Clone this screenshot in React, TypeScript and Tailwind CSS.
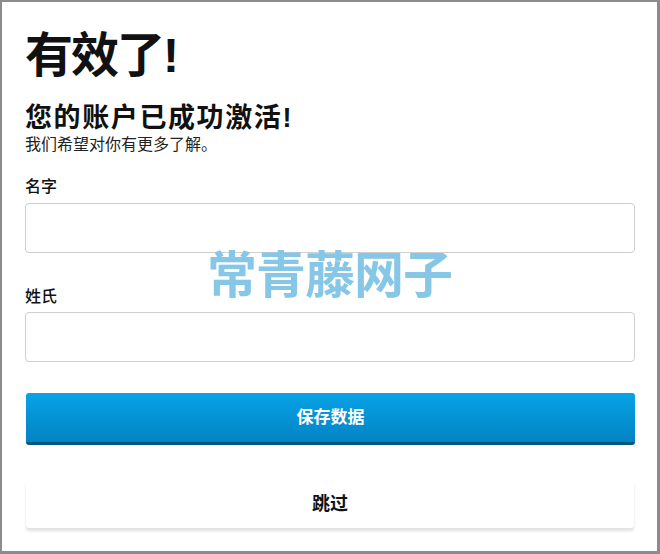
export default function App() {
  return (
    <div
      className="relative w-[660px] h-[554px] bg-white border-l-2 border-t-2 border-r-[3px] border-b-[3px] border-[#8c8c8c] overflow-hidden"
      style={{ fontFamily: '"Liberation Sans", "Noto Sans CJK SC", sans-serif' }}
    >
      <div className="pl-[23px] pt-[26px] flex flex-col">
        <h1 className="text-[48px] leading-[56px] font-bold text-[#111] tracking-[-2px]">有效了!</h1>
        <h2 className="mt-[18px] text-[27px] leading-[33px] font-bold text-[#111] tracking-[1.6px]">您的账户已成功激活!</h2>
        <p className="text-[16px] leading-[20px] text-[#222]">我们希望对你有更多了解。</p>

        <label className="mt-[22px] text-[16px] leading-[20px] font-medium text-[#111]">名字</label>
        <input className="mt-[6px] h-[50px] w-[610px] rounded border border-[#cfcfcf] bg-white" />

        <label className="mt-[34px] text-[16px] leading-[20px] font-medium text-[#111]">姓氏</label>
        <input className="mt-[5px] h-[50px] w-[610px] rounded border border-[#cfcfcf] bg-white" />

        <button className="mt-[31px] ml-[1px] h-[52px] w-[609px] rounded-[3px] bg-gradient-to-b from-[#07a3e6] to-[#0383c4] border-b-[3px] border-[#05577f] text-white text-[17px] font-bold">
          保存数据
        </button>

        <button className="mt-[36px] ml-[1px] h-[47px] w-[608px] rounded-[3px] bg-white text-[#111] text-[18px] font-bold shadow-[0_3px_3px_rgba(0,0,0,0.12)]">
          跳过
        </button>
      </div>

      <div className="absolute left-[205px] top-[244px] text-[50px] leading-[60px] font-bold text-[#86c6e6] tracking-[-1px] pointer-events-none">
        常青藤网子
      </div>
    </div>
  );
}
